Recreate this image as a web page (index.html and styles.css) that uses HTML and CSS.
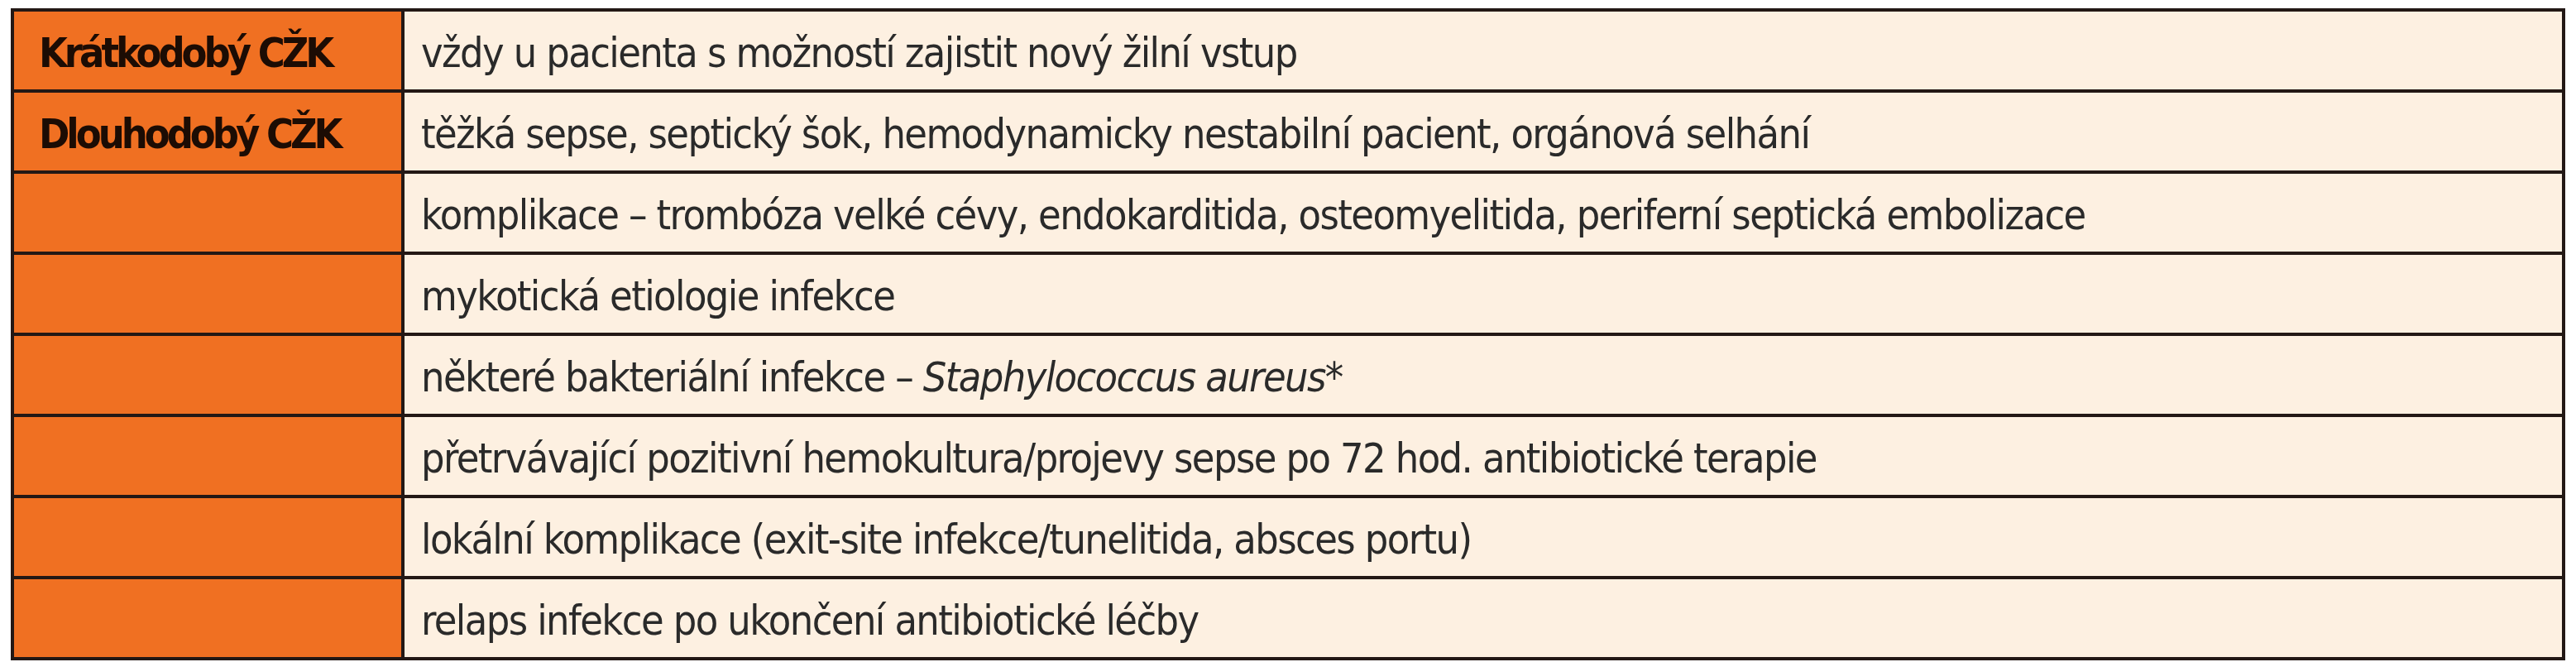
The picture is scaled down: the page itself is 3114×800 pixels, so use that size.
FILE: index.html
```html
<!DOCTYPE html>
<html lang="cs">
<head>
<meta charset="utf-8">
<title>CŽK</title>
<link rel="stylesheet" href="styles.css">
</head>
<body>
<table class="tbl">
  <tr><td class="key">Krátkodobý CŽK</td><td class="val">vždy u pacienta s možností zajistit nový žilní vstup</td></tr>
  <tr><td class="key">Dlouhodobý CŽK</td><td class="val">těžká sepse, septický šok, hemodynamicky nestabilní pacient, orgánová selhání</td></tr>
  <tr><td class="key"></td><td class="val">komplikace – trombóza velké cévy, endokarditida, osteomyelitida, periferní septická embolizace</td></tr>
  <tr><td class="key"></td><td class="val">mykotická etiologie infekce</td></tr>
  <tr><td class="key"></td><td class="val">některé bakteriální infekce – <i>Staphylococcus aureus</i>*</td></tr>
  <tr><td class="key"></td><td class="val">přetrvávající pozitivní hemokultura/projevy sepse po 72 hod. antibiotické terapie</td></tr>
  <tr><td class="key"></td><td class="val">lokální komplikace (exit-site infekce/tunelitida, absces portu)</td></tr>
  <tr><td class="key"></td><td class="val">relaps infekce po ukončení antibiotické léčby</td></tr>
</table>
</body>
</html>
```
FILE: styles.css
```css
html, body {
  margin: 0;
  padding: 0;
  background: #ffffff;
}
body {
  padding: 10px 0 0 13px;
  font-family: "DejaVu Sans Condensed", "DejaVu Sans", sans-serif;
}
.tbl {
  border-collapse: collapse;
  width: 3088px;
  border: 4px solid #231815;
}
.tbl td {
  border: 4px solid #231815;
  height: 98px;
  padding: 6px 0 0 0;
  vertical-align: middle;
  box-sizing: border-box;
}
.key {
  width: 472px;
  background: #f07022;
  color: #1c0c04;
  font-weight: bold;
  font-size: 50px;
  letter-spacing: -4px;
  padding-left: 30px !important;
}
.val {
  background: #fdf0e1;
  color: #2a2a2a;
  font-size: 50px;
  letter-spacing: -1.6px;
  padding-left: 20px !important;
}
```
